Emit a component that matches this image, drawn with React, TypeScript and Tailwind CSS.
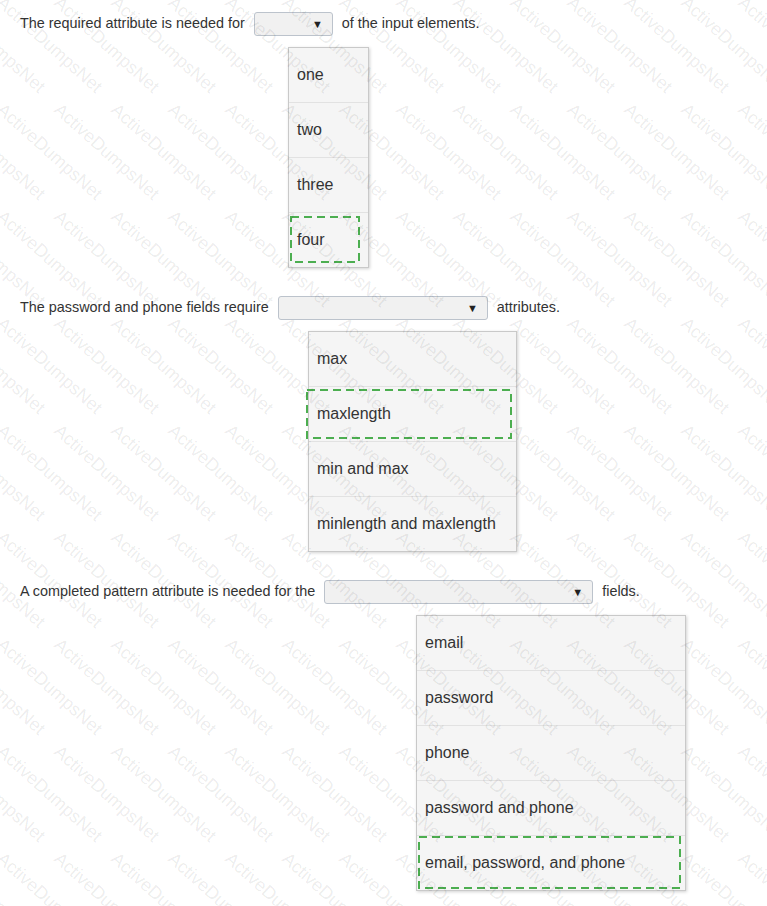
import React from 'react'

type Question = {
  before: string
  after: string
  selectWidth: string
  listClass: string
  options: string[]
  marked: number
  markClass: string
}

const questions: Question[] = [
  {
    before: 'The required attribute is needed for',
    after: 'of the input elements.',
    selectWidth: 'w-[79px]',
    listClass: 'ml-[268px] w-[81px]',
    options: ['one', 'two', 'three', 'four'],
    marked: 3,
    markClass: 'left-[1px] right-[8px] top-[3px] bottom-[4px]',
  },
  {
    before: 'The password and phone fields require',
    after: 'attributes.',
    selectWidth: 'w-[210px]',
    listClass: 'ml-[288px] w-[209px]',
    options: ['max', 'maxlength', 'min and max', 'minlength and maxlength'],
    marked: 1,
    markClass: '-left-[3px] right-[4px] top-[2px] bottom-[2px]',
  },
  {
    before: 'A completed pattern attribute is needed for the',
    after: 'fields.',
    selectWidth: 'w-[269px]',
    listClass: 'ml-[396px] w-[270px]',
    options: ['email', 'password', 'phone', 'password and phone', 'email, password, and phone'],
    marked: 4,
    markClass: 'left-[1px] right-[4px] top-0 bottom-[1px]',
  },
]

function FakeSelect({ width }: { width: string }) {
  return (
    <div
      className={`${width} flex h-6 items-center justify-end rounded-[3px] border border-[#bcc3cc] bg-[#f1f1f1] pr-[9px]`}
    >
      <span className="text-[11px] leading-none text-[#222]">▼</span>
    </div>
  )
}

// dashed highlight drawn as svg so the dash length matches (8 on / 5 off)
function DashedMark({ className }: { className: string }) {
  return (
    <div className={`pointer-events-none absolute ${className}`}>
      <svg className="block h-full w-full">
        <rect
          x="1"
          y="1"
          className="h-[calc(100%-2px)] w-[calc(100%-2px)]"
          fill="none"
          stroke="#4cae50"
          strokeWidth="2"
          strokeDasharray="8 5"
        />
      </svg>
    </div>
  )
}

function Watermark() {
  const marks: { x: number; y: number }[] = []
  for (let row = -1; row < 10; row++) {
    for (let col = -3; col < 15; col++) {
      marks.push({ x: col * 57, y: -7 + row * 107 })
    }
  }
  return (
    <div className="pointer-events-none absolute inset-0 overflow-hidden">
      {marks.map((m, i) => (
        <span
          key={i}
          className="absolute origin-top-left whitespace-nowrap text-[18px] leading-none text-black/[0.085]"
          style={{ left: m.x + 6, top: m.y, transform: 'rotate(42deg)' }}
        >
          ActiveDumpsNet
        </span>
      ))}
    </div>
  )
}

export default function App() {
  return (
    <div className="relative min-h-[906px] overflow-hidden bg-white pl-5 pt-[12px] font-['Liberation_Sans',Arial,sans-serif] text-[#333]">
      {questions.map((q, qi) => (
        <div key={qi} className="mb-[28px]">
          <div className="flex h-6 items-center gap-[9px] text-[14.4px]">
            <span>{q.before}</span>
            <FakeSelect width={q.selectWidth} />
            <span>{q.after}</span>
          </div>
          <div
            className={`${q.listClass} mt-[11px] border border-[#c9c9c9] bg-[#f5f5f5] shadow-[1px_1px_3px_rgba(0,0,0,0.18)]`}
          >
            {q.options.map((opt, oi) => (
              <div
                key={opt}
                className={`relative flex items-center pl-2 text-[16px] ${
                  oi > 0 ? 'h-[55px] border-t border-[#e2e2e2]' : 'h-[54px]'
                }`}
              >
                {opt}
                {oi === q.marked && <DashedMark className={q.markClass} />}
              </div>
            ))}
          </div>
        </div>
      ))}
      <Watermark />
    </div>
  )
}
